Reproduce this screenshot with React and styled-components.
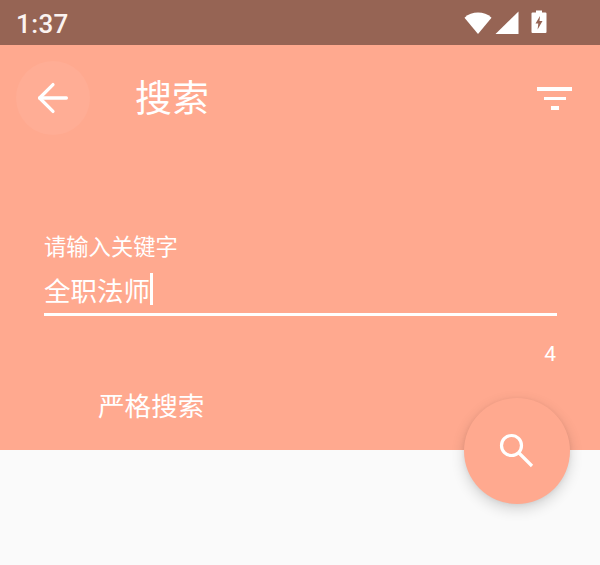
import React from "react";
import styled, { createGlobalStyle } from "styled-components";
import { ArrowLeft } from "lucide-react";

const GlobalStyle = createGlobalStyle`
  html, body {
    margin: 0;
    padding: 0;
    background: #fafafa;
  }
  body {
    font-family: "Roboto", "Noto Sans CJK SC", sans-serif;
  }
`;

const Screen = styled.div`
  position: relative;
  width: 600px;
  height: 565px;
  overflow: hidden;
  background: #fafafa;
`;

const Hero = styled.div`
  height: 450px;
  background: #ffa98f;
  color: #fff;
  display: flex;
  flex-direction: column;
`;

const StatusBar = styled.div`
  height: 45px;
  background: #966454;
  display: flex;
  align-items: center;
  justify-content: space-between;
  padding: 0 16px;
`;

const Clock = styled.span`
  font-size: 26px;
  font-weight: 500;
  letter-spacing: 0.4px;
  padding-top: 3px;
  color: #fbf3f0;
`;

const StatusIcons = styled.div`
  display: flex;
  align-items: center;
  gap: 3px;
  margin-right: 37px;
`;

const BatteryIcon = styled.svg`
  margin: -2px 0 0 9px;
`;

const Toolbar = styled.div`
  height: 106px;
  display: flex;
  align-items: center;
  padding: 0 27px 0 16px;
`;

const BackButton = styled.div`
  width: 74px;
  height: 74px;
  border-radius: 50%;
  background: #ffad95;
  display: flex;
  align-items: center;
  justify-content: center;
`;

const Title = styled.h1`
  flex: 1;
  margin: 3px 0 0 45px;
  font-size: 37px;
  font-weight: 400;
  line-height: 1;
`;

const Field = styled.div`
  margin: 83px 43px 0 44px;
`;

const FieldLabel = styled.div`
  font-size: 22.3px;
  line-height: 26px;
`;

const FieldValue = styled.div`
  display: flex;
  align-items: center;
  height: 48px;
  margin-top: 5px;
  font-size: 26.5px;
  border-bottom: 3px solid #fff;
`;

const Caret = styled.span`
  width: 3px;
  height: 32px;
  background: #fff;
`;

const Counter = styled.div`
  margin: 26px 44px 0 0;
  text-align: right;
  font-size: 21px;
  line-height: 24px;
`;

const OptionLabel = styled.div`
  margin: 24px 0 0 98px;
  font-size: 26.6px;
  line-height: 34px;
`;

const Fab = styled.div`
  position: absolute;
  left: 464px;
  top: 398px;
  width: 106px;
  height: 106px;
  border-radius: 50%;
  background: #ffa98f;
  box-shadow: 0 5px 14px rgba(0, 0, 0, 0.16), 0 1px 4px rgba(0, 0, 0, 0.06);
  display: flex;
  align-items: center;
  justify-content: center;
`;

export default function App() {
  return (
    <Screen>
      <GlobalStyle />
      <Hero>
        <StatusBar>
          <Clock>1:37</Clock>
          <StatusIcons>
            <svg width="28" height="24" viewBox="0 0 29 24">
              <path d="M0.5 6.5 C8 -0.5 21 -0.5 28.5 6.5 L14.5 23.5 Z" fill="#fff" />
            </svg>
            <svg width="24" height="24" viewBox="0 0 24 24">
              <path d="M0.5 23 L23.5 0.5 V23 Z" fill="#fff" />
            </svg>
            <BatteryIcon width="16" height="25" viewBox="0 0 16 24">
              <path
                fillRule="evenodd"
                fill="#fff"
                d="M5 1 H11 V3 H14.5 Q15.5 3 15.5 4 V22.5 Q15.5 23.5 14.5 23.5 H1.5 Q0.5 23.5 0.5 22.5 V4 Q0.5 3 1.5 3 H5 Z M9 6.5 L4.5 14 H7.3 L6.6 20 L11.5 11.5 H8.5 Z"
              />
            </BatteryIcon>
          </StatusIcons>
        </StatusBar>
        <Toolbar>
          <BackButton>
            <ArrowLeft size={46} color="#fff" strokeWidth={1.7} />
          </BackButton>
          <Title>搜索</Title>
          <svg width="36" height="24" viewBox="0 0 36 24">
            <rect x="0" y="1" width="35" height="4" fill="#fff" />
            <rect x="7" y="11" width="22" height="3" fill="#fff" />
            <rect x="14" y="20" width="8" height="4" fill="#fff" />
          </svg>
        </Toolbar>
        <Field>
          <FieldLabel>请输入关键字</FieldLabel>
          <FieldValue>
            全职法师
            <Caret />
          </FieldValue>
        </Field>
        <Counter>4</Counter>
        <OptionLabel>严格搜索</OptionLabel>
      </Hero>
      <Fab>
        <svg width="40" height="40" viewBox="0 0 40 40" fill="none" stroke="#fff" strokeWidth="3.2">
          <circle cx="14.5" cy="14.5" r="10" />
          <path d="M21.5 21.5 L35 35" />
        </svg>
      </Fab>
    </Screen>
  );
}
